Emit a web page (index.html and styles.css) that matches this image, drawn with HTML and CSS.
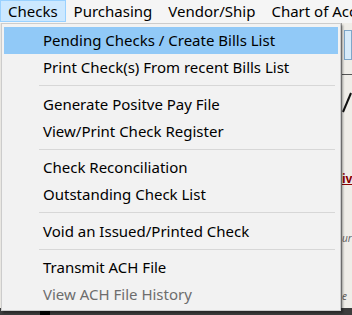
FILE: index.html
```html
<!DOCTYPE html>
<html lang="en">
<head>
  <meta charset="UTF-8">
  <title>Checks Menu</title>
  <link rel="stylesheet" href="styles.css">
</head>
<body>
  <!-- MENU BAR -->
  <nav class="menubar">
    <div class="menubar-item open">Checks</div>
    <div class="menubar-item">Purchasing</div>
    <div class="menubar-item">Vendor/Ship</div>
    <div class="menubar-item">Chart of Accounts</div>
  </nav>

  <!-- WORKSPACE BEHIND THE MENU -->
  <div class="workspace">
    <div class="side-panel">
      <div class="side-box"></div>
      <div class="side-rule"></div>
      <svg class="side-slash" width="10" height="22" viewBox="0 0 10 22">
        <path d="M1 21 L9 2" stroke="#111" stroke-width="2" fill="none"/>
      </svg>
      <div class="side-title">iv</div>
      <div class="side-note">ur</div>
      <div class="side-note">e</div>
    </div>
    <div class="bottom-strip">
      <span class="bottom-mark"></span>
    </div>

    <!-- CHECKS DROPDOWN -->
    <ul class="dropdown">
      <li class="item active">Pending Checks / Create Bills List</li>
      <li class="item">Print Check(s) From recent Bills List</li>
      <li class="sep"></li>
      <li class="item">Generate Positve Pay File</li>
      <li class="item">View/Print Check Register</li>
      <li class="sep"></li>
      <li class="item">Check Reconciliation</li>
      <li class="item">Outstanding Check List</li>
      <li class="sep"></li>
      <li class="item">Void an Issued/Printed Check</li>
      <li class="sep"></li>
      <li class="item">Transmit ACH File</li>
      <li class="item disabled">View ACH File History</li>
    </ul>
  </div>
</body>
</html>
```

FILE: styles.css
```css
* {
  margin: 0;
  padding: 0;
  box-sizing: border-box;
}

body {
  font-family: 'Noto Sans', 'Open Sans', sans-serif;
  font-size: 15px;
  color: #000;
  background-color: #f0f0f0;
  width: 352px;
  height: 315px;
  overflow: hidden;
}

.menubar {
  display: flex;
  height: 23px;
  background-color: #f5f5f5;
  white-space: nowrap;
  overflow: hidden;
}

.menubar-item {
  padding: 0 7px;
  line-height: 21px;
  height: 22px;
  border: 1px solid transparent;
}

.menubar-item.open {
  background-color: #cce8ff;
  border-color: #99d1ff;
}

.workspace {
  position: relative;
  height: 292px;
  background-color: #e9e7e2;
}

.side-panel {
  margin-left: 341px;
  height: 285px;
  padding-top: 7px;
  background-color: #efede8;
  border-left: 1px solid #a0a0a0;
  overflow: hidden;
}

.side-box {
  height: 30px;
  margin-left: 2px;
  background-color: #d7ebfa;
  border: 1px solid #7fa7c9;
}

.side-rule {
  height: 1px;
  margin-top: 14px;
  background-color: #555;
}

.side-slash {
  display: block;
  margin-top: 16px;
}

.side-title {
  margin-top: 58px;
  font-size: 12px;
  font-weight: bold;
  color: #8b0000;
  text-decoration: underline;
  line-height: 16px;
}

.side-note {
  margin-top: 44px;
  font-style: italic;
  color: #666;
  font-size: 10px;
  line-height: 14px;
}

.bottom-strip {
  height: 7px;
  background-color: #3c3c3c;
}

.bottom-mark {
  display: block;
  width: 10px;
  height: 7px;
  margin-left: 40px;
  background-color: #000;
}

.dropdown {
  position: absolute;
  top: 0;
  left: 1px;
  width: 340px;
  list-style: none;
  padding: 3px 2px 2px;
  background-color: #f2f2f2;
  border: 1px solid #cccccc;
  box-shadow: 2px 2px 2px rgba(0, 0, 0, 0.35);
}

.item {
  height: 27px;
  line-height: 26px;
  padding-left: 39px;
  white-space: nowrap;
}

.item.active {
  background-color: #91c9f7;
}

.item.disabled {
  color: #6d6d6d;
}

.sep {
  height: 1px;
  margin: 4px 3px 4.5px 35px;
  background-color: #d7d7d7;
}
```
